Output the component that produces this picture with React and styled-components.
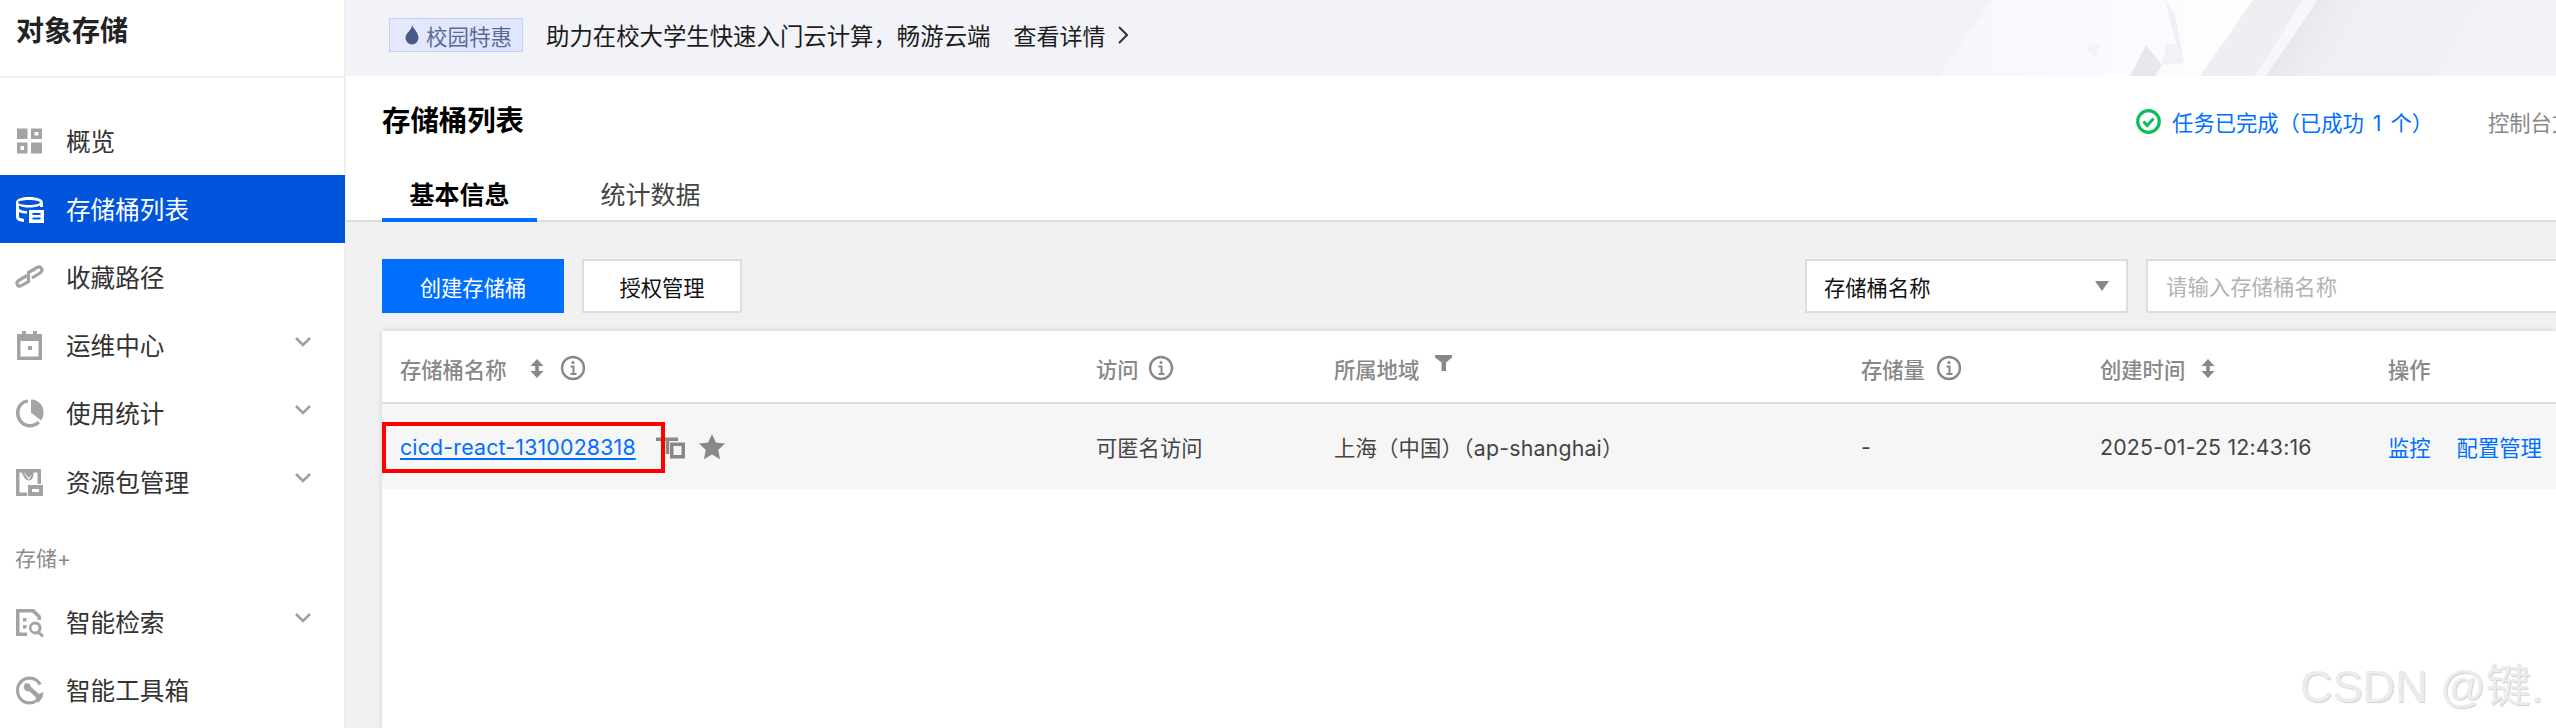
import styled, { createGlobalStyle } from "styled-components";

const GlobalStyle = createGlobalStyle`
  html, body {
    margin: 0;
    padding: 0;
    height: 100%;
    overflow: hidden;
    background: #fff;
  }
  * { box-sizing: border-box; }
  body {
    font-family: Inter, "Noto Sans CJK SC", sans-serif;
    color: #333;
  }
`;

const Page = styled.div`
  position: relative;
  display: grid;
  grid-template-columns: 346px 2210px;
  width: 2556px;
  height: 728px;
  overflow: hidden;
`;

/* sidebar */
const Sidebar = styled.aside`
  border-right: 2px solid #eee;
  background: #fff;
`;
const Brand = styled.div`
  height: 78px;
  padding: 0 0 18px 16px;
  display: flex;
  align-items: center;
  font-size: 28px;
  font-weight: 700;
  color: #222;
  border-bottom: 2px solid #eee;
`;
const Nav = styled.nav`
  padding-top: 29px;
`;
const NavItem = styled.div`
  display: flex;
  align-items: center;
  gap: 22px;
  width: 345px;
  height: 68.2px;
  padding: 0 34px 0 15px;
  font-size: 24.6px;
  color: ${({ $active }) => ($active ? "#fff" : "#333")};
  background: ${({ $active }) => ($active ? "#0055dc" : "transparent")};
  svg.icon {
    flex: none;
    color: ${({ $active }) => ($active ? "#fff" : "#a3a3a3")};
  }
`;
const NavLabel = styled.span`
  flex: 1;
  padding-bottom: 3px;
`;
const Caret = styled.svg`
  flex: none;
  margin-bottom: 8px;
`;
const GroupLabel = styled.div`
  height: 72px;
  padding: 10px 0 0 15px;
  display: flex;
  align-items: center;
  font-size: 21px;
  color: #8a8a8a;
`;

/* main */
const Main = styled.main`
  display: flex;
  flex-direction: column;
  min-width: 0;
  background: #f1f1f1;
`;
const Banner = styled.div`
  position: relative;
  flex: none;
  height: 76px;
  padding: 0 0 6px 43px;
  display: flex;
  align-items: center;
  background: #f2f3f8;
  overflow: hidden;
`;
const BannerArt = styled.svg`
  position: absolute;
  top: 0;
  right: 0;
`;
const PromoTag = styled.span`
  display: flex;
  align-items: center;
  gap: 7px;
  width: 134px;
  height: 34px;
  padding-left: 15px;
  font-size: 21.5px;
  color: #5b6a96;
  background: linear-gradient(90deg, #e4e9fd, #dfe5fb);
  border: 1px solid #c3cffa;
`;
const PromoText = styled.span`
  margin-left: 23px;
  font-size: 23.4px;
  color: #1c1c1c;
`;
const PromoLink = styled.span`
  display: flex;
  align-items: center;
  gap: 13px;
  margin-left: 23px;
  font-size: 23px;
  color: #1c1c1c;
`;
const PageHeader = styled.header`
  flex: none;
  height: 146px;
  padding-left: 36px;
  background: #fff;
  border-bottom: 2px solid #ddd;
`;
const TitleRow = styled.div`
  height: 90px;
  display: flex;
  align-items: center;
  justify-content: space-between;
`;
const Title = styled.h1`
  margin: 0 0 6px;
  font-size: 28.4px;
  font-weight: 700;
  color: #000;
`;
const StatusGroup = styled.div`
  display: flex;
  align-items: center;
  font-size: 21.3px;
`;
const TaskStatus = styled.span`
  display: flex;
  align-items: center;
  gap: 11px;
  color: #006eff;
  word-spacing: 3px;
`;
const DocLink = styled.span`
  width: 68px;
  margin-left: 55px;
  white-space: nowrap;
  overflow: hidden;
  color: #888;
`;
const Tabs = styled.div`
  display: flex;
  gap: 36px;
  height: 56px;
`;
const Tab = styled.div`
  width: 155px;
  height: 56px;
  padding-top: 11px;
  text-align: center;
  font-size: 25px;
  line-height: 36px;
  font-weight: ${({ $active }) => ($active ? 600 : 400)};
  color: ${({ $active }) => ($active ? "#000" : "#444")};
  border-bottom: 4px solid ${({ $active }) => ($active ? "#006eff" : "transparent")};
`;
const Content = styled.div`
  flex: 1;
  padding: 37px 0 0 36px;
`;
const Toolbar = styled.div`
  display: grid;
  grid-template-columns: 182px 160px 1fr 323px 410px;
  column-gap: 18px;
  height: 54px;
`;
const Button = styled.button`
  padding: 0;
  font: inherit;
  font-size: 21.3px;
  color: ${({ $primary }) => ($primary ? "#fff" : "#111")};
  background: ${({ $primary }) => ($primary ? "#006eff" : "#fff")};
  border: ${({ $primary }) => ($primary ? "none" : "2px solid #ddd")};
`;
const Select = styled.div`
  grid-column: 4;
  display: flex;
  align-items: center;
  justify-content: space-between;
  padding: 0 17px 0 17px;
  font-size: 21.3px;
  color: #111;
  background: #fff;
  border: 2px solid #ddd;
`;
const SelectArrow = styled.span`
  width: 0;
  height: 0;
  border-left: 7px solid transparent;
  border-right: 7px solid transparent;
  border-top: 10px solid #888;
`;
const SearchInput = styled.div`
  display: flex;
  align-items: center;
  padding: 0 0 2px 18px;
  font-size: 21.4px;
  color: #b3b3b3;
  background: #fff;
  border: 2px solid #ddd;
  border-right: none;
`;
const Table = styled.div`
  height: 397px;
  margin-top: 18px;
  background: #fff;
  box-shadow: 0 0 6px rgba(0, 0, 0, 0.14);
`;
const TableRow = styled.div`
  display: grid;
  grid-template-columns: 696px 238px 527px 239px 288px 186px;
  height: ${({ $head }) => ($head ? "73px" : "85px")};
  background: ${({ $head }) => ($head ? "#fff" : "#f6f6f6")};
  border-bottom: ${({ $head }) => ($head ? "2px solid #ddd" : "none")};
`;
const HeadCell = styled.div`
  display: flex;
  align-items: center;
  padding: 3px 0 0 18px;
  font-size: 21.3px;
  font-weight: 500;
  color: #888;
  white-space: nowrap;
`;
const Cell = styled.div`
  position: relative;
  display: flex;
  align-items: center;
  gap: ${({ $gap }) => $gap || 0}px;
  padding: 0 0 0 18px;
  font-size: 21.3px;
  letter-spacing: ${({ $latin }) => ($latin ? "0.2px" : "0")};
  color: #444;
  white-space: nowrap;
`;
const BucketLink = styled.a`
  color: #006eff;
  letter-spacing: 0.2px;
  text-decoration: underline;
  text-underline-offset: 3px;
  text-decoration-thickness: 2px;
`;
const ActionLink = styled.a`
  color: #006eff;
`;
const Annotation = styled.div`
  position: absolute;
  top: 18px;
  left: 0;
  width: 283px;
  height: 51px;
  border: 4px solid #ff0000;
`;
const Watermark = styled.div`
  position: absolute;
  left: 2300px;
  top: 657px;
  font-family: "Liberation Sans", "Noto Sans CJK SC", sans-serif;
  font-size: 45px;
  line-height: 60px;
  white-space: nowrap;
  color: #ececec;
  text-shadow: 1px 1px 1px #cfcfcf;
`;

const Icon = ({ children, size = 29 }) => (
  <svg className="icon" width={size} height={size} viewBox="0 0 29 29" fill="currentColor">
    {children}
  </svg>
);

const Chevron = () => (
  <Caret width="16" height="10" viewBox="0 0 16 10" fill="none" stroke="#a0a0a0" strokeWidth="2.6">
    <path d="M1 1l7 7 7-7" />
  </Caret>
);

const Info = () => (
  <svg width="26" height="26" viewBox="0 0 26 26" fill="none" stroke="#888" style={{ flex: "none" }}>
    <circle cx="13" cy="13" r="11" strokeWidth="2.4" />
    <path d="M10.5 11.5H13.5V19M10.5 19H16.5" strokeWidth="2" />
    <circle cx="13" cy="7.6" r="1.5" fill="#888" stroke="none" />
  </svg>
);

const Sort = ({ left }) => (
  <svg width="16" height="19" viewBox="0 0 16 19" fill="#888" style={{ flex: "none", marginLeft: left, marginRight: 15 }}>
    <path d="M8 0l6.5 7h-4.7v5h4.7L8 19l-6.5-7h4.7V7H1.5z" />
  </svg>
);

const navTop = [
  {
    label: "概览",
    icon: (
      <path fillRule="evenodd" d="M2 1.500h10.500v10.500H2zM16 1.500h11v10.500H16zM19.500 5v3.500h4V5zM2 15.500h10.500v11H2zM5.500 19v4h3.500v-4zM16 15.500h11v11H16z" />
    ),
  },
  {
    label: "存储桶列表",
    active: true,
    icon: (
      <>
        <path d="M14 2C8 2 1 3.500 1 7.500V22c0 3 3 4.500 8 5v-3c-3-.4-5-1-5-2.400V17c2 1 5 1.500 8 1.500V16c-4 0-8-1-8-3v-2.500C6 12 10 12.500 14 12.500s8-.5 11-2V12h3V7.500C28 3.500 20 2 14 2zm0 3c6 0 11 1 11 2.500S20 10 14 10 3 9 3 7.500 8 5 14 5z" />
        <path fillRule="evenodd" d="M14 15h15v13H14zM17.500 18v2h8v-2zM17.500 22.500v2h8v-2z" />
      </>
    ),
  },
  {
    label: "收藏路径",
    icon: (
      <path
        fill="none"
        stroke="currentColor"
        strokeWidth="3.200"
        d="M12 12.500L3.500 17.500Q1 19.500 2.500 22Q4 24 6.500 22.500L13.500 18.500V9.500L22 4.500Q25 3 26.500 5.500Q28 8 25 10L17 15"
      />
    ),
  },
  {
    label: "运维中心",
    chevron: true,
    icon: (
      <path fillRule="evenodd" d="M7 0h4v3h7V0h4v3h5v26H2V3h5zM5.500 10v15.500h18V10zM13 15h4v4h-4z" />
    ),
  },
  {
    label: "使用统计",
    chevron: true,
    icon: (
      <>
        <path d="M13 0.500C5.500 1 1 7 1 14c0 8 6 14.500 14 14.500 4 0 7.500-1.500 10-4.200l-2.500-2.300c-2 2-4.500 3-7.500 3-6 0-10.500-5-10.500-11 0-5 3-9.500 8.500-10.500z" />
        <path d="M16 .5c7 0 12.500 5.500 12.500 13 0 3-1 6-2.500 8l-10-8z" />
      </>
    ),
  },
  {
    label: "资源包管理",
    chevron: true,
    icon: (
      <path fillRule="evenodd" d="M1 1h25v15h-3.500V4.500H18.500L14 10 9 4.500H4.500v20H12V28H1zM6.500 4.500h2L14 12l4-7.500h1L18 9c-.5 2-2 3.500-4 3.500S10 11 9 9zM13 17h15v11H13zM17 21v3h7v-3z" />
    ),
  },
];

const navBottom = [
  {
    label: "智能检索",
    chevron: true,
    icon: (
      <>
        <path fillRule="evenodd" d="M1 1h18l7 7v4h-3.500V9.500L17.500 4.500H4.500v20H12V28H1zM8 10h3.500v3.500H8zM8 17h3.500v3.500H8z" />
        <path fillRule="evenodd" d="M20 13.500a6.500 6.500 0 0 1 5.200 10.400L29 27.500 27 29.500l-3.800-3.600A6.500 6.500 0 1 1 20 13.500zm0 3a3.500 3.500 0 1 0 0 7 3.500 3.500 0 0 0 0-7z" />
      </>
    ),
  },
  {
    label: "智能工具箱",
    icon: (
      <>
        <path d="M14.500.5C7 .5 1 6.500 1 14.500s6 14 13.500 14c2.500 0 5-.7 7-2l-2-2.500c-1.500.8-3.200 1.300-5 1.300C8.500 25.300 4 20.500 4 14.500S8.500 3.700 14.500 3.700c4 0 7.500 2.200 9.300 5.500l2.800-1.500C24.300 3.300 19.800.5 14.500.5z" />
        <path d="M10 7l5 1 1 3 8 7 4.500-2-1 5.500-4 5-3.500-1 1-4-6.500-6-3.500-.5L8.500 12z" />
      </>
    ),
  },
];

const NavEntry = ({ item }) => (
  <NavItem $active={item.active}>
    <Icon>{item.icon}</Icon>
    <NavLabel>{item.label}</NavLabel>
    {item.chevron && <Chevron />}
  </NavItem>
);

function App() {
  return (
    <Page>
      <GlobalStyle />
      <Sidebar>
        <Brand>对象存储</Brand>
        <Nav>
          {navTop.map((item) => (
            <NavEntry key={item.label} item={item} />
          ))}
          <GroupLabel>存储+</GroupLabel>
          {navBottom.map((item) => (
            <NavEntry key={item.label} item={item} />
          ))}
        </Nav>
      </Sidebar>

      <Main>
        <Banner>
          <BannerArt width="700" height="76" viewBox="0 0 700 76">
            <defs>
              <linearGradient id="panel" x1="0" x2="1" y1="0" y2="0">
                <stop offset="0" stopColor="#f6f7fc" />
                <stop offset="0.65" stopColor="#fafbfe" />
                <stop offset="1" stopColor="#ffffff" />
              </linearGradient>
              <linearGradient id="dark" x1="0" x2="1" y1="0" y2="0.15">
                <stop offset="0" stopColor="#e0e1e5" />
                <stop offset="0.3" stopColor="#eeeff3" />
                <stop offset="1" stopColor="#f2f3f8" />
              </linearGradient>
            </defs>
            <polygon points="136,0 397,0 344,76 82,76" fill="url(#panel)" />
            <polygon points="397,0 447,0 399,76 344,76" fill="#eeeff2" />
            <polygon points="447,0 462,0 410,76 399,76" fill="#f6f7fa" />
            <polygon points="462,0 700,0 700,76 410,76" fill="url(#dark)" />
            <polygon points="309,0 319,14 328,63 320,44" fill="#eff0f3" />
            <polygon points="310,44 320,44 328,63 306,65" fill="#f1f2f5" />
            <polygon points="290,45 306,65 299,76 274,76" fill="#e7e8eb" />
            <polygon points="229,45 244,45 240,60" fill="#f3f4f8" />
            <polygon points="590,0 594,0 544,76 540,76" fill="#eeeff3" />
          </BannerArt>
          <PromoTag>
            <svg width="14" height="20" viewBox="0 0 14 20" fill="#4a5a88">
              <path d="M7.500 0C8 4 13.500 7 13.500 13a6.500 6.500 0 0 1-13 0C.5 8 6 6 7.500 0z" />
            </svg>
            校园特惠
          </PromoTag>
          <PromoText>助力在校大学生快速入门云计算，畅游云端</PromoText>
          <PromoLink>
            查看详情
            <svg width="10" height="18" viewBox="0 0 10 18" fill="none" stroke="#333" strokeWidth="2">
              <path d="M1 1l8 8-8 8" />
            </svg>
          </PromoLink>
        </Banner>

        <PageHeader>
          <TitleRow>
            <Title>存储桶列表</Title>
            <StatusGroup>
              <TaskStatus>
                <svg width="25" height="25" viewBox="0 0 25 25" fill="none">
                  <circle cx="12.500" cy="12.500" r="10.800" stroke="#0abf5b" strokeWidth="3.200" />
                  <path d="M7.500 12.500l3.700 4 6.300-7" stroke="#0abf5b" strokeWidth="3" />
                </svg>
                任务已完成（已成功 1 个）
              </TaskStatus>
              <DocLink>控制台文档</DocLink>
            </StatusGroup>
          </TitleRow>
          <Tabs>
            <Tab $active>基本信息</Tab>
            <Tab>统计数据</Tab>
          </Tabs>
        </PageHeader>

        <Content>
          <Toolbar>
            <Button $primary>创建存储桶</Button>
            <Button>授权管理</Button>
            <Select>
              存储桶名称
              <SelectArrow />
            </Select>
            <SearchInput>请输入存储桶名称</SearchInput>
          </Toolbar>

          <Table>
            <TableRow $head>
              <HeadCell>
                存储桶名称
                <Sort left={22} />
                <Info />
              </HeadCell>
              <HeadCell>
                访问
                <span style={{ width: 9 }} />
                <Info />
              </HeadCell>
              <HeadCell>
                所属地域
                <svg width="17" height="16" viewBox="0 0 17 16" fill="#888" style={{ marginLeft: 16, marginBottom: 10 }}>
                  <path d="M0 0h17v2.500l-6 5V16H6.500V7.500L0 2.500z" />
                </svg>
              </HeadCell>
              <HeadCell>
                存储量
                <span style={{ width: 11 }} />
                <Info />
              </HeadCell>
              <HeadCell>
                创建时间
                <Sort left={15} />
              </HeadCell>
              <HeadCell>操作</HeadCell>
            </TableRow>
            <TableRow>
              <Cell>
                <BucketLink>cicd-react-1310028318</BucketLink>
                <svg width="29" height="24" viewBox="0 0 29 24" fill="none" stroke="#888" strokeWidth="3.500" style={{ marginLeft: 20 }}>
                  <path d="M0 4.250H22M11.500 4V19" />
                  <rect x="15.750" y="9.250" width="11.500" height="12.500" />
                </svg>
                <svg width="26" height="26" viewBox="0 0 26 26" fill="#888" style={{ marginLeft: 14 }}>
                  <path d="M13 0l3.900 8.600 9.100 1-6.800 6.300 1.900 9.300L13 20.400l-8.100 4.800 1.900-9.300L0 9.600l9.100-1z" />
                </svg>
                <Annotation />
              </Cell>
              <Cell>可匿名访问</Cell>
              <Cell $latin>上海（中国）（ap-shanghai）</Cell>
              <Cell>-</Cell>
              <Cell $latin>2025-01-25 12:43:16</Cell>
              <Cell $gap={26}>
                <ActionLink>监控</ActionLink>
                <ActionLink>配置管理</ActionLink>
              </Cell>
            </TableRow>
          </Table>
        </Content>
      </Main>

      <Watermark>CSDN @键.</Watermark>
    </Page>
  );
}

export default App;
